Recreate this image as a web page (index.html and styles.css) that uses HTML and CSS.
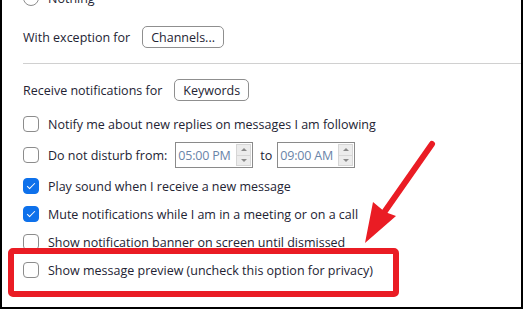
FILE: index.html
```html
<!DOCTYPE html>
<html lang="en">
<head>
    <meta charset="UTF-8">
    <meta name="viewport" content="width=device-width, initial-scale=1.0">
    <title>Chat Notification Settings</title>
    <link rel="stylesheet" href="styles.css">
</head>
<body>

    <div class="window">
        <div class="row radio-row">
            <span class="radio"></span>
            <span>Nothing</span>
        </div>

        <div class="row field-row exception-row">
            <span>With exception for</span>
            <button class="btn">Channels...</button>
        </div>

        <div class="divider"></div>

        <div class="row field-row receive-row">
            <span>Receive notifications for</span>
            <button class="btn">Keywords</button>
        </div>

        <div class="options">
            <div class="row check-row">
                <span class="checkbox"></span>
                <span>Notify me about new replies on messages I am following</span>
            </div>
            <div class="row check-row dnd-row">
                <span class="checkbox"></span>
                <span>Do not disturb from:</span>
                <div class="time-input">
                    <span class="time-text">05:00 PM</span>
                    <span class="spinner"><span class="up"></span><span class="down"></span></span>
                </div>
                <span class="to">to</span>
                <div class="time-input">
                    <span class="time-text">09:00 AM</span>
                    <span class="spinner"><span class="up"></span><span class="down"></span></span>
                </div>
            </div>
            <div class="row check-row">
                <span class="checkbox checked"></span>
                <span>Play sound when I receive a new message</span>
            </div>
            <div class="row check-row">
                <span class="checkbox checked"></span>
                <span>Mute notifications while I am in a meeting or on a call</span>
            </div>
            <div class="row check-row">
                <span class="checkbox"></span>
                <span>Show notification banner on screen until dismissed</span>
            </div>
            <div class="row check-row">
                <span class="checkbox"></span>
                <span>Show message preview (uncheck this option for privacy)</span>
            </div>
        </div>

        <!-- red annotation drawn over the settings -->
        <svg class="annotation" width="523" height="310" viewBox="0 0 523 310">
            <rect x="11" y="251" width="385" height="43" rx="2" fill="none" stroke="#ea1c24" stroke-width="6"/>
            <line x1="432" y1="144" x2="383" y2="214" stroke="#ea1c24" stroke-width="6" stroke-linecap="round"/>
            <polygon points="365,243 373,202 385,212 396,216" fill="#ea1c24"/>
        </svg>
    </div>

</body>
</html>
```

FILE: styles.css
```css
body {
    margin: 0;
    background: #fff;
    font-family: "Open Sans", "Noto Sans", sans-serif;
    font-size: 12.5px;
    color: #232333;
}
.window {
    position: relative;
    width: 523px;
    height: 309px;
    box-sizing: border-box;
    border-left: 2px solid #000;
    border-right: 2px solid #000;
    border-bottom: 2px solid #000;
    padding-left: 21px;
    overflow: hidden;
}
.row {
    display: flex;
    align-items: center;
}
.radio-row {
    height: 28px;
    margin-top: -16px;
}
.radio {
    width: 14px;
    height: 14px;
    border: 1px solid #8c8c8c;
    border-radius: 50%;
    margin-right: 9px;
}
.field-row {
    height: 30px;
}
.exception-row {
    margin-top: 10px;
}
.receive-row {
    margin-top: 11px;
}
.field-row .btn {
    margin-left: 12px;
}
.btn {
    height: 22px;
    padding: 0 8px;
    font-family: inherit;
    font-size: 12.5px;
    color: #232333;
    background: #fff;
    border: 1px solid #8f8f8f;
    border-radius: 5px;
}
.divider {
    height: 1px;
    margin-top: 11px;
    background: #d0d0d0;
}
.options {
    margin-top: 5px;
}
.check-row {
    height: 28px;
}
.dnd-row {
    height: 34px;
}
.checkbox {
    flex-shrink: 0;
    width: 14px;
    height: 14px;
    border: 1px solid #8c8c8c;
    border-radius: 4px;
    margin-right: 9px;
    display: flex;
    align-items: center;
    justify-content: center;
}
.checkbox.checked {
    background: #0e71eb;
    border-color: #0e71eb;
}
.checkbox.checked::after {
    content: "";
    width: 7px;
    height: 3px;
    border-left: 1.5px solid #fff;
    border-bottom: 1.5px solid #fff;
    transform: translateY(-1px) rotate(-45deg);
}
.time-input {
    display: flex;
    align-items: center;
    justify-content: space-between;
    width: 78px;
    height: 26px;
    box-sizing: border-box;
    border: 1px solid #8a8a8a;
    margin-left: 8px;
    padding: 0 1px 0 2px;
}
.time-text {
    color: #6a84a8;
    letter-spacing: -0.2px;
}
.spinner {
    display: flex;
    flex-direction: column;
    width: 15px;
    height: 22px;
    border: 1px solid #d6d6d6;
    box-sizing: border-box;
    background: #ececec;
}
.spinner span {
    flex: 1;
    display: flex;
    align-items: center;
    justify-content: center;
}
.spinner .up {
    border-bottom: 1px solid #d6d6d6;
}
.spinner .up::after {
    content: "";
    border: 3px solid transparent;
    border-bottom: 3px solid #8a8a8a;
    border-top: 0;
}
.spinner .down::after {
    content: "";
    border: 3px solid transparent;
    border-top: 3px solid #8a8a8a;
    border-bottom: 0;
}
.to {
    margin-left: 7px;
}
.to + .time-input {
    margin-left: 5px;
}
.annotation {
    position: absolute;
    left: -2px;
    top: 0;
}
```
